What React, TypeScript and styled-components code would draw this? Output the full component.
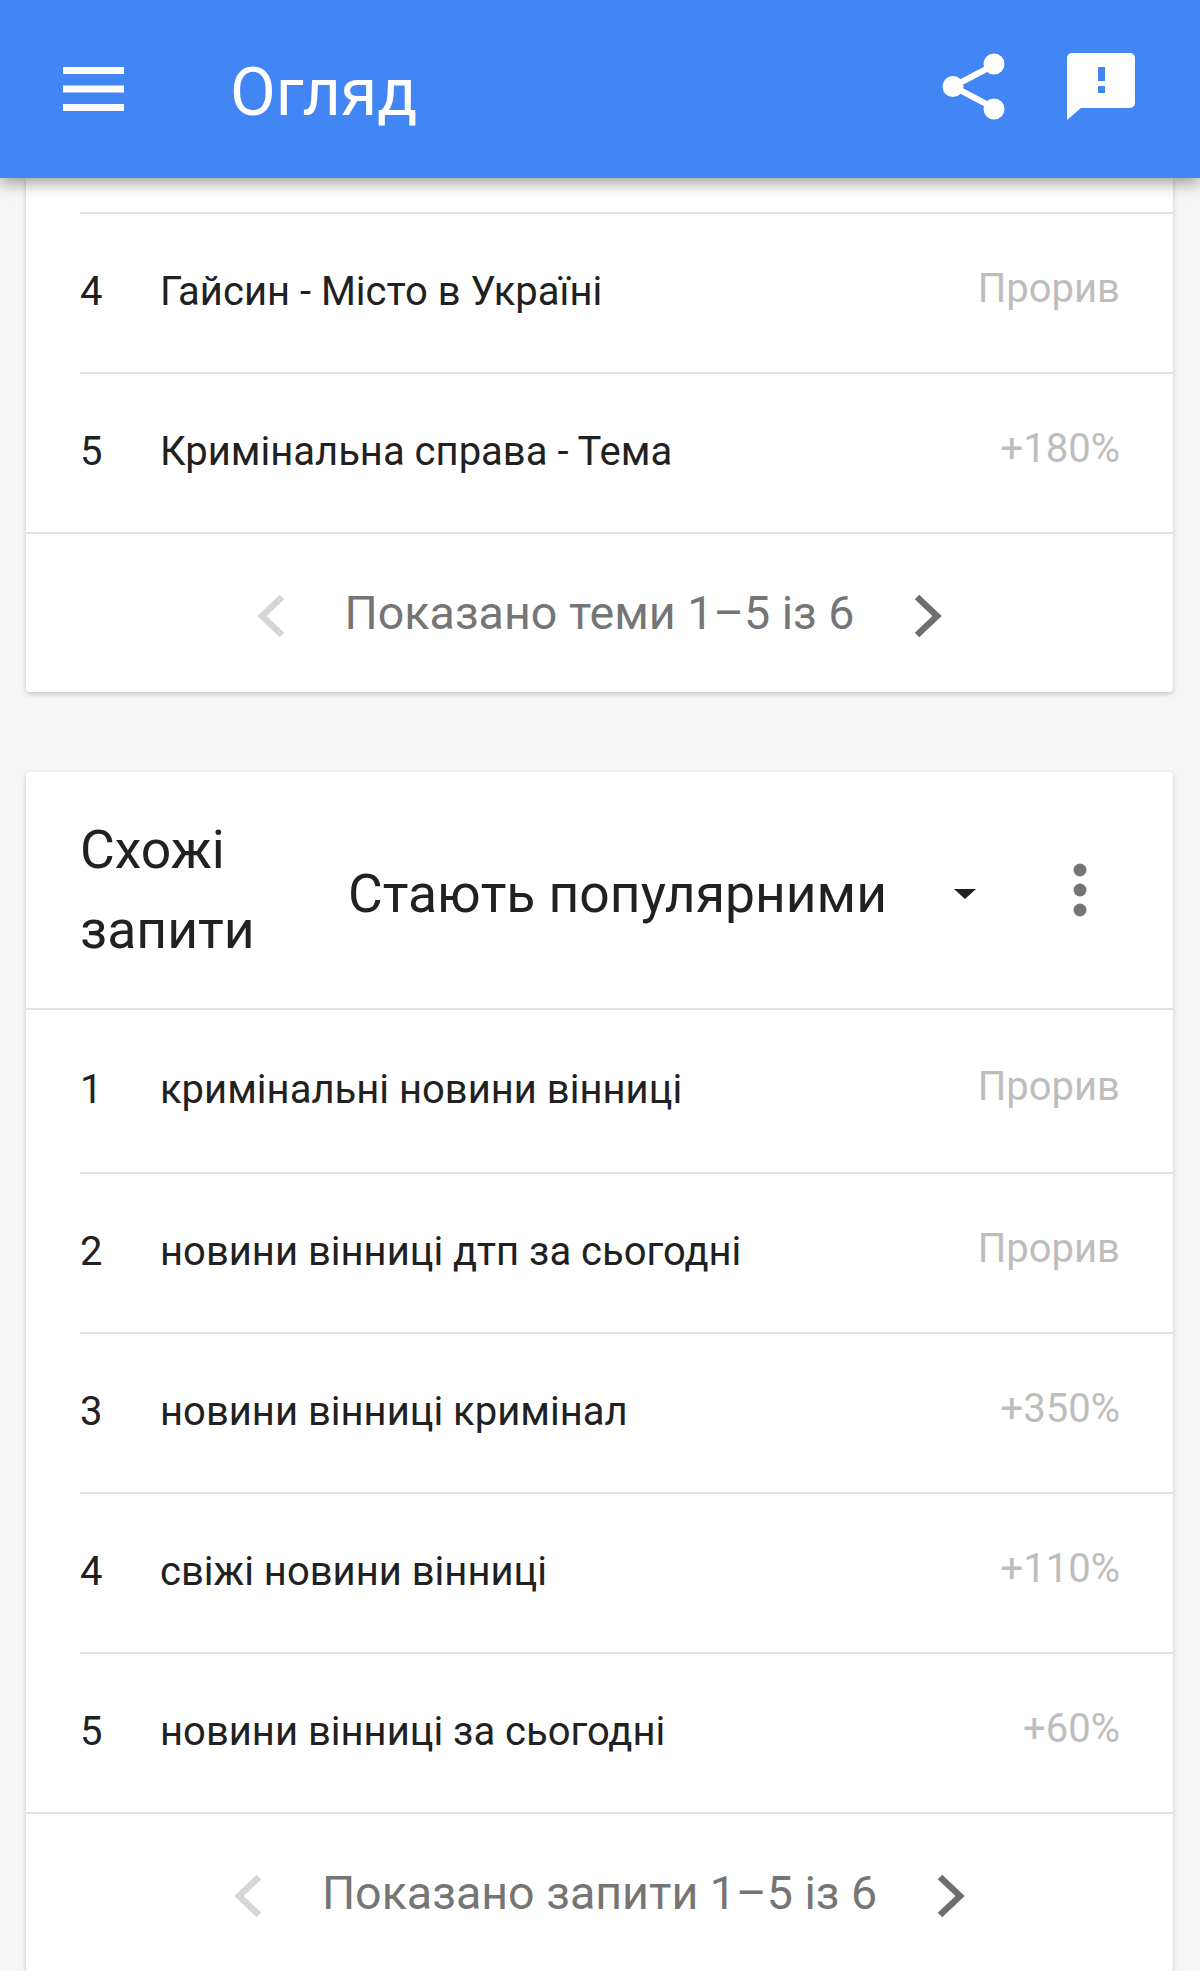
import styled, { createGlobalStyle } from 'styled-components';

const GlobalStyle = createGlobalStyle`
  html, body {
    margin: 0;
    padding: 0;
    height: 1971px;
    overflow: hidden;
    background: #f6f6f6;
    font-family: Roboto, "Noto Sans", sans-serif;
  }
`;

const Page = styled.div`
  width: 1200px;
  height: 1971px;
  overflow: hidden;
  background: #f6f6f6;
`;

const TopBar = styled.header`
  position: relative;
  z-index: 2;
  display: flex;
  align-items: center;
  height: 178px;
  padding: 0 65px 0 63px;
  box-sizing: border-box;
  background: #4285f4;
  color: #fff;
  box-shadow: 0 4px 16px rgba(0, 0, 0, 0.42);
`;

const Title = styled.h1`
  flex: 1;
  margin: 6px 0 0 106px;
  font-size: 66.5px;
  font-weight: 400;
  line-height: 1;
`;

const MenuIcon = styled.svg`
  display: block;
  flex: none;
`;

const ShareIcon = styled.svg`
  display: block;
  flex: none;
  margin: -5px 62px 0 0;
`;

const FeedbackIcon = styled.svg`
  display: block;
  flex: none;
  margin-top: -5px;
`;

const Content = styled.main`
  display: flex;
  flex-direction: column;
  gap: 80px;
  padding: 0 26px;
`;

const Card = styled.section<{ $clipped?: boolean }>`
  background: #fff;
  width: 1147px;
  border-radius: ${(p) => (p.$clipped ? '0 0 4px 4px' : '4px')};
  box-shadow: 0 2px 5px rgba(0, 0, 0, 0.2);
  padding-top: ${(p) => (p.$clipped ? '34px' : '0')};
`;

const CardHead = styled.div`
  display: flex;
  align-items: center;
  height: 238px;
  box-sizing: border-box;
  padding: 0 0 0 54px;
  border-bottom: 2px solid #e0e0e0;
`;

const CardTitle = styled.h2`
  width: 268px;
  flex: none;
  margin: 0;
  font-size: 53.5px;
  font-weight: 400;
  line-height: 80px;
  color: #212121;
`;

const Picker = styled.div`
  display: flex;
  align-items: center;
  font-size: 53.4px;
  color: #212121;
  margin-top: 7px;
`;

const Caret = styled.span`
  margin-left: 67px;
  width: 0;
  height: 0;
  border-left: 11px solid transparent;
  border-right: 11px solid transparent;
  border-top: 10px solid #212121;
`;

const MoreButton = styled.svg`
  display: block;
  margin-left: 96px;
  margin-top: -1px;
`;

const List = styled.ol`
  margin: 0;
  padding: 0;
  list-style: none;
`;

const Row = styled.li<{ $tall?: boolean }>`
  display: flex;
  align-items: center;
  height: ${(p) => (p.$tall ? '162px' : '160px')};
  box-sizing: border-box;
  margin-left: 54px;
  padding-right: 53px;
  border-top: 2px solid #e0e0e0;
  &:first-child {
    border-top: ${(p) => (p.$tall ? '0' : '2px solid #e0e0e0')};
  }
`;

const RowIndex = styled.span`
  width: 80px;
  flex: none;
  margin-top: -4px;
  font-size: 40px;
  color: #212121;
`;

const RowLabel = styled.span`
  flex: 1;
  margin-top: -4px;
  font-size: 40px;
  color: #212121;
`;

const RowValue = styled.span`
  margin-top: -10px;
  font-size: 40px;
  color: #bdbdbd;
`;

const Pager = styled.footer`
  display: flex;
  align-items: center;
  justify-content: center;
  gap: 58px;
  height: 160px;
  box-sizing: border-box;
  border-top: 2px solid #e0e0e0;
  font-size: 46.6px;
  color: #757575;
`;

const PagerLabel = styled.span`
  margin-top: 0;
`;

const PagerArrow = styled.svg`
  display: block;
  flex: none;
  margin-top: 6px;
`;

function Chevron({ right, muted }: { right?: boolean; muted?: boolean }) {
  return (
    <PagerArrow width="30" height="44" viewBox="0 0 30 44" fill="none">
      <path
        d={right ? 'M5 3 L25 22 L5 41' : 'M25 3 L5 22 L25 41'}
        stroke={muted ? '#d6d6d6' : '#6e6e6e'}
        strokeWidth="6.5"
      />
    </PagerArrow>
  );
}

function Pagination({ label }: { label: string }) {
  return (
    <Pager>
      <Chevron muted />
      <PagerLabel>{label}</PagerLabel>
      <Chevron right />
    </Pager>
  );
}

const topics = [
  { n: 4, label: 'Гайсин - Місто в Україні', value: 'Прорив' },
  { n: 5, label: 'Кримінальна справа - Тема', value: '+180%' }
];

const queries = [
  { n: 1, label: 'кримінальні новини вінниці', value: 'Прорив' },
  { n: 2, label: 'новини вінниці дтп за сьогодні', value: 'Прорив' },
  { n: 3, label: 'новини вінниці кримінал', value: '+350%' },
  { n: 4, label: 'свіжі новини вінниці', value: '+110%' },
  { n: 5, label: 'новини вінниці за сьогодні', value: '+60%' }
];

export default function App() {
  return (
    <Page>
      <GlobalStyle />
      <TopBar>
        <MenuIcon width="61" height="44" viewBox="0 0 61 44" fill="#fff">
          <rect x="0" y="0" width="61" height="7" />
          <rect x="0" y="18.5" width="61" height="7" />
          <rect x="0" y="37" width="61" height="7" />
        </MenuIcon>
        <Title>Огляд</Title>
        <ShareIcon width="63" height="67" viewBox="0 0 63 67" fill="#fff">
          <path d="M52 12 L11 33.5 L52 55" fill="none" stroke="#fff" strokeWidth="6" />
          <circle cx="52" cy="11" r="10.5" />
          <circle cx="11" cy="33.5" r="10.5" />
          <circle cx="52" cy="56" r="10.5" />
        </ShareIcon>
        <FeedbackIcon width="68" height="67" viewBox="0 0 68 67" fill="#fff">
          <path d="M5 0 H63 A5 5 0 0 1 68 5 V50 A5 5 0 0 1 63 55 H14 L0 67 V5 A5 5 0 0 1 5 0 Z" />
          <rect x="31" y="14" width="7" height="14" fill="#4285f4" />
          <rect x="31" y="33" width="7" height="7" fill="#4285f4" />
        </FeedbackIcon>
      </TopBar>
      <Content>
        <Card $clipped>
          <List>
            {topics.map((t) => (
              <Row key={t.n}>
                <RowIndex>{t.n}</RowIndex>
                <RowLabel>{t.label}</RowLabel>
                <RowValue>{t.value}</RowValue>
              </Row>
            ))}
          </List>
          <Pagination label="Показано теми 1–5 із 6" />
        </Card>
        <Card>
          <CardHead>
            <CardTitle>Схожі запити</CardTitle>
            <Picker>
              Стають популярними
              <Caret />
            </Picker>
            <MoreButton width="16" height="54" viewBox="0 0 16 54" fill="#757575">
              <circle cx="8" cy="7" r="6.5" />
              <circle cx="8" cy="27" r="6.5" />
              <circle cx="8" cy="47" r="6.5" />
            </MoreButton>
          </CardHead>
          <List>
            {queries.map((q) => (
              <Row key={q.n} $tall={q.n === 1}>
                <RowIndex>{q.n}</RowIndex>
                <RowLabel>{q.label}</RowLabel>
                <RowValue>{q.value}</RowValue>
              </Row>
            ))}
          </List>
          <Pagination label="Показано запити 1–5 із 6" />
        </Card>
      </Content>
    </Page>
  );
}
